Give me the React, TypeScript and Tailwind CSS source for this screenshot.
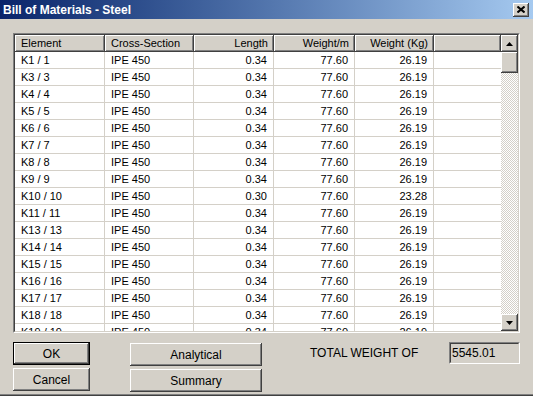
import React from 'react';

const raised =
  'bg-[#d4d0c8] shadow-[inset_-1px_-1px_#404040,inset_1px_1px_#ffffff,inset_-2px_-2px_#808080,inset_2px_2px_#d4d0c8]';

const cols = [
  { label: 'Element', w: 'w-[90px]', align: 'text-left pl-[6px]' },
  { label: 'Cross-Section', w: 'w-[89px]', align: 'text-left pl-[6px]' },
  { label: 'Length', w: 'w-[80px]', align: 'text-right pr-[6px]' },
  { label: 'Weight/m', w: 'w-[81px]', align: 'text-right pr-[6px]' },
  { label: 'Weight (Kg)', w: 'w-[79px]', align: 'text-right pr-[6px]' },
  { label: '', w: 'flex-1', align: '' },
];

const rows = [
  ['K1 / 1', '0.34', '26.19'],
  ['K3 / 3', '0.34', '26.19'],
  ['K4 / 4', '0.34', '26.19'],
  ['K5 / 5', '0.34', '26.19'],
  ['K6 / 6', '0.34', '26.19'],
  ['K7 / 7', '0.34', '26.19'],
  ['K8 / 8', '0.34', '26.19'],
  ['K9 / 9', '0.34', '26.19'],
  ['K10 / 10', '0.30', '23.28'],
  ['K11 / 11', '0.34', '26.19'],
  ['K13 / 13', '0.34', '26.19'],
  ['K14 / 14', '0.34', '26.19'],
  ['K15 / 15', '0.34', '26.19'],
  ['K16 / 16', '0.34', '26.19'],
  ['K17 / 17', '0.34', '26.19'],
  ['K18 / 18', '0.34', '26.19'],
  ['K19 / 19', '0.34', '26.19'],
];

function Arrow({ down }: { down?: boolean }) {
  return (
    <svg width="7" height="4" viewBox="0 0 7 4">
      <polygon points={down ? '0,0 7,0 3.5,4' : '0,4 7,4 3.5,0'} fill="#000" />
    </svg>
  );
}

function Button({ label, className }: { label: string; className: string }) {
  return (
    <div className={`${raised} ${className} flex items-center justify-center text-[12px] text-black`}>
      {label}
    </div>
  );
}

export default function App() {
  return (
    <div className="w-[533px] h-[396px] bg-[#d4d0c8] flex flex-col font-['Liberation_Sans',Arial,sans-serif] shadow-[inset_0_-1px_#404040,inset_0_-2px_#808080] overflow-hidden">
      {/* title bar */}
      <div className="h-[19px] flex items-center justify-between bg-linear-to-r from-[#0a246a] to-[#a6caf0] pl-[3px] pr-[4px]">
        <span className="text-white font-bold text-[12px]">Bill of Materials - Steel</span>
        <div className={`${raised} w-[16px] h-[14px] flex items-center justify-center`}>
          <svg width="8" height="7" viewBox="0 0 8 7">
            <path d="M0.5 0.5 L7.5 6.5 M7.5 0.5 L0.5 6.5" stroke="#000" strokeWidth="2" />
          </svg>
        </div>
      </div>

      <div className="px-[13px] pt-[14px]">
        {/* list view */}
        <div className="h-[300px] border border-t-[#808080] border-l-[#808080] border-b-white border-r-white">
          <div className="h-full flex border border-t-[#404040] border-l-[#404040] border-b-[#d4d0c8] border-r-[#d4d0c8] bg-white">
            <div className="flex-1 flex flex-col overflow-hidden text-[11px] text-black">
              <div className="flex h-[17px] shrink-0">
                {cols.map((c, i) => (
                  <div key={i} className={`${raised} ${c.w} ${c.align} shrink-0 leading-[16px]`}>
                    {c.label}
                  </div>
                ))}
              </div>
              {rows.map((r, i) => (
                <div key={i} className="flex h-[17px] shrink-0 border-b border-[#d4d0c8]">
                  <div className={`${cols[0].w} ${cols[0].align} shrink-0 border-r border-[#d4d0c8] leading-[16px]`}>{r[0]}</div>
                  <div className={`${cols[1].w} ${cols[1].align} shrink-0 border-r border-[#d4d0c8] leading-[16px]`}>IPE 450</div>
                  <div className={`${cols[2].w} ${cols[2].align} shrink-0 border-r border-[#d4d0c8] leading-[16px]`}>{r[1]}</div>
                  <div className={`${cols[3].w} ${cols[3].align} shrink-0 border-r border-[#d4d0c8] leading-[16px]`}>77.60</div>
                  <div className={`${cols[4].w} ${cols[4].align} shrink-0 border-r border-[#d4d0c8] leading-[16px]`}>{r[2]}</div>
                  <div className="flex-1" />
                </div>
              ))}
            </div>
            {/* scrollbar */}
            <div className="w-[17px] flex flex-col shrink-0">
              <div className={`${raised} h-[17px] flex items-center justify-center`}>
                <Arrow />
              </div>
              <div className={`${raised} h-[21px]`} />
              <div className="flex-1 bg-[repeating-conic-gradient(#ffffff_0_25%,#d4d0c8_0_50%)] bg-[length:2px_2px]" />
              <div className={`${raised} h-[17px] flex items-center justify-center`}>
                <Arrow down />
              </div>
            </div>
          </div>
        </div>

        {/* bottom controls */}
        <div className="flex mt-[9px] text-[12px] text-black">
          <div className="flex flex-col gap-[3px] w-[77px]">
            <div className="border border-black">
              <Button label="OK" className="h-[21px]" />
            </div>
            <Button label="Cancel" className="h-[23px]" />
          </div>
          <div className="flex flex-col gap-[3px] w-[132px] ml-[40px] pt-[1px]">
            <Button label="Analytical" className="h-[23px]" />
            <Button label="Summary" className="h-[23px]" />
          </div>
          <div className="ml-[48px] mt-[3px] h-[16px] leading-[16px] text-[12px]">TOTAL WEIGHT OF</div>
          <div className="ml-auto w-[71px] h-[22px] border border-t-[#808080] border-l-[#808080] border-b-white border-r-white">
            <div className="h-full border border-t-[#404040] border-l-[#404040] border-b-[#d4d0c8] border-r-[#d4d0c8] pl-[1px] leading-[18px] text-[12px]">
              5545.01
            </div>
          </div>
        </div>
      </div>
    </div>
  );
}
